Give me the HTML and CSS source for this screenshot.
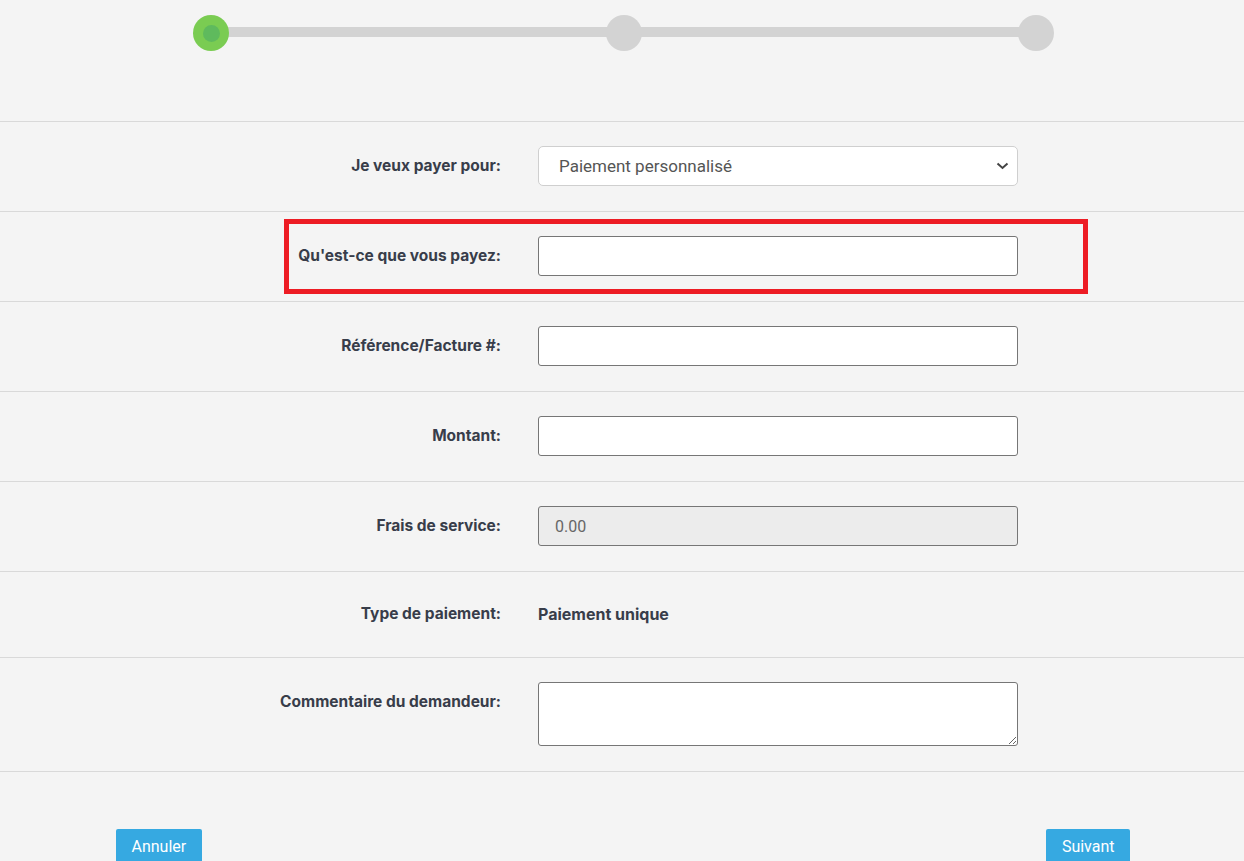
FILE: index.html
```html
<!DOCTYPE html>
<html lang="fr">
<head>
	<meta charset="UTF-8">
	<title>Paiement</title>
	<link rel="stylesheet" href="styles.css">
</head>
<body>
	<div class="steps">
		<div class="step active"><span class="dot"></span></div>
		<div class="step"></div>
		<div class="step"></div>
	</div>

	<div class="form">
		<div class="row">
			<label class="lbl">Je veux payer pour:</label>
			<div class="select">
				<span>Paiement personnalisé</span>
				<svg width="13" height="8" viewBox="0 0 13 8"><path d="M1.5 1.5 L6.5 6 L11.5 1.5" fill="none" stroke="#444" stroke-width="2"/></svg>
			</div>
		</div>
		<div class="row marked">
			<label class="lbl">Qu'est-ce que vous payez:</label>
			<input class="field" type="text">
			<div class="mark"></div>
		</div>
		<div class="row">
			<label class="lbl">Référence/Facture #:</label>
			<input class="field" type="text">
		</div>
		<div class="row">
			<label class="lbl">Montant:</label>
			<input class="field" type="text">
		</div>
		<div class="row">
			<label class="lbl">Frais de service:</label>
			<input class="field" type="text" value="0.00" disabled>
		</div>
		<div class="row">
			<label class="lbl short">Type de paiement:</label>
			<div class="value">Paiement unique</div>
		</div>
		<div class="row">
			<label class="lbl">Commentaire du demandeur:</label>
			<textarea class="field area"></textarea>
		</div>
	</div>

	<div class="actions">
		<button class="btn">Annuler</button>
		<button class="btn">Suivant</button>
	</div>
</body>
</html>
```

FILE: styles.css
```css
*{margin:0;padding:0;box-sizing:border-box;}
body{background:#f4f4f4;font-family:Roboto,"Liberation Sans",sans-serif;color:#383d4a;}

.steps{display:flex;justify-content:space-between;align-items:center;width:861px;height:36px;margin:15px 0 70px 193px;position:relative;}
.steps:before{content:"";position:absolute;left:18px;right:18px;top:12px;height:10px;background:#d3d3d3;}
.step{width:36px;height:36px;border-radius:50%;background:#d3d3d3;position:relative;display:flex;align-items:center;justify-content:center;}
.step.active{background:#7acc52;}
.step .dot{width:17px;height:17px;border-radius:50%;background:#5fba5d;}

.form{border-top:1px solid #d9d9d9;}
.row{display:grid;grid-template-columns:501px 480px;column-gap:37px;padding:24px 0 25px;border-bottom:1px solid #d9d9d9;position:relative;}
.lbl{font-family:Inter,Roboto,sans-serif;font-size:15.5px;font-weight:700;line-height:40px;text-align:right;align-self:start;}
.lbl.short{line-height:36px;}
.value{font-family:Inter,Roboto,sans-serif;font-size:16px;font-weight:700;line-height:36px;}

.select{display:flex;align-items:center;justify-content:space-between;height:40px;padding:0 8px 0 20px;background:#fff;border:1px solid #cfcfcf;border-radius:5px;font-size:17px;color:#555;}
.field{display:block;width:480px;height:40px;padding:0 16px;background:#fff;border:1px solid #767676;border-radius:3px;font-family:Roboto,"Liberation Sans",sans-serif;font-size:16px;color:#555;outline:none;}
.field:disabled{background:#ececec;color:#666;}
.area{height:64px;padding:8px 16px;resize:vertical;}

.mark{position:absolute;left:284px;top:7px;width:804px;height:75px;border:5px solid #ed1c24;}

.actions{display:flex;justify-content:space-between;margin:57px 114px 0 116px;}
.btn{background:#36a9e1;color:#fff;border:none;border-radius:2px;font-family:Roboto,"Liberation Sans",sans-serif;font-size:16px;line-height:20px;padding:8px 15.5px;}
```
